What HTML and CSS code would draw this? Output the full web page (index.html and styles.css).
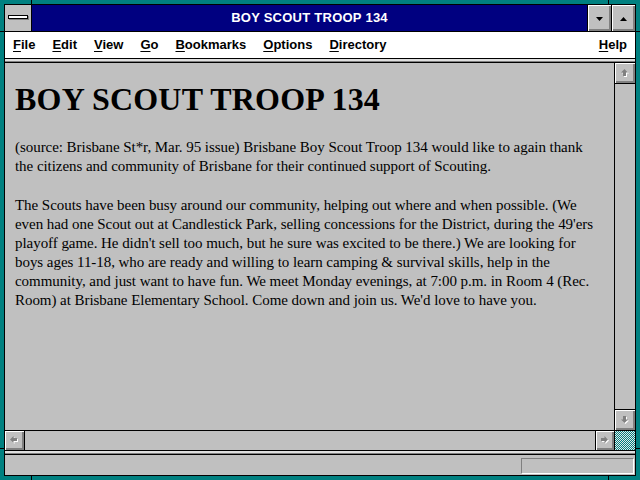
FILE: index.html
```html
<!DOCTYPE html>
<html>
<head>
<meta charset="utf-8">
<link rel="stylesheet" href="styles.css">
</head>
<body>
<div class="desk">
  <span class="notch nt-l"></span><span class="notch nt-r"></span>
  <span class="notch nb-l"></span><span class="notch nb-r"></span>
  <span class="notch nl-t"></span><span class="notch nl-b"></span>
  <span class="notch nr-t"></span><span class="notch nr-b"></span>
  <div class="win">
    <div class="titlebar">
      <div class="sysmenu"><span class="sysbar"></span></div>
      <div class="title">BOY SCOUT TROOP 134</div>
      <div class="tbtn"><svg width="7" height="4" viewBox="0 0 7 4"><polygon points="0,0 7,0 3.5,4" fill="#000"/></svg></div>
      <div class="tbtn"><svg width="7" height="4" viewBox="0 0 7 4"><polygon points="0,4 7,4 3.5,0" fill="#000"/></svg></div>
    </div>
    <div class="menubar">
      <span class="mi"><u>F</u>ile</span>
      <span class="mi"><u>E</u>dit</span>
      <span class="mi"><u>V</u>iew</span>
      <span class="mi"><u>G</u>o</span>
      <span class="mi"><u>B</u>ookmarks</span>
      <span class="mi"><u>O</u>ptions</span>
      <span class="mi"><u>D</u>irectory</span>
      <span class="mi help"><u>H</u>elp</span>
    </div>
    <div class="sep"></div>
    <div class="view">
      <div class="viewrow">
        <div class="doc">
          <h1>BOY SCOUT TROOP 134</h1>
          <p>(source: Brisbane St*r, Mar. 95 issue) Brisbane Boy Scout Troop 134 would like to again thank<br>the citizens and community of Brisbane for their continued support of Scouting.</p>
          <p class="p2">The Scouts have been busy around our community, helping out where and when possible. (We<br>even had one Scout out at Candlestick Park, selling concessions for the District, during the 49'ers<br>playoff game. He didn't sell too much, but he sure was excited to be there.) We are looking for<br>boys ages 11-18, who are ready and willing to learn camping &amp; survival skills, help in the<br>community, and just want to have fun. We meet Monday evenings, at 7:00 p.m. in Room 4 (Rec.<br>Room) at Brisbane Elementary School. Come down and join us. We'd love to have you.</p>
        </div>
        <div class="vscroll">
          <div class="sbtn up"><svg width="9" height="9" viewBox="0 0 9 9"><polygon points="4.5,1 8,4.5 6,4.5 6,8 3,8 3,4.5 1,4.5" fill="#fff"/><polygon points="3.5,0 7,3.5 5,3.5 5,7 2,7 2,3.5 0,3.5" fill="#808080"/></svg></div>
          <div class="track"></div>
          <div class="sbtn down"><svg width="9" height="9" viewBox="0 0 9 9"><polygon points="4.5,8 8,4.5 6,4.5 6,1 3,1 3,4.5 1,4.5" fill="#fff"/><polygon points="3.5,7 7,3.5 5,3.5 5,0 2,0 2,3.5 0,3.5" fill="#808080"/></svg></div>
        </div>
      </div>
      <div class="hrow">
        <div class="sbtn left"><svg width="9" height="9" viewBox="0 0 9 9"><polygon points="1,4.5 4.5,1 4.5,3 8,3 8,6 4.5,6 4.5,8" fill="#fff"/><polygon points="0,3.5 3.5,0 3.5,2 7,2 7,5 3.5,5 3.5,7" fill="#808080"/></svg></div>
        <div class="htrack"></div>
        <div class="sbtn right"><svg width="9" height="9" viewBox="0 0 9 9"><polygon points="8,4.5 4.5,1 4.5,3 1,3 1,6 4.5,6 4.5,8" fill="#fff"/><polygon points="7,3.5 3.5,0 3.5,2 0,2 0,5 3.5,5 3.5,7" fill="#808080"/></svg></div>
        <div class="corner"></div>
      </div>
    </div>
    <div class="sep"></div>
    <div class="status"><div class="field"></div></div>
  </div>
</div>
</body>
</html>
```
FILE: styles.css
```css
* { box-sizing: border-box; }
html, body { margin: 0; padding: 0; }
body {
  width: 640px;
  height: 480px;
  overflow: hidden;
  background: #008080;
  font-family: "Liberation Sans", Arial, sans-serif;
}
.desk {
  position: relative;
  width: 640px;
  height: 480px;
  padding: 4px;
}
.notch { position: absolute; background: #000; }
.nt-l { left: 31px; top: 0; width: 1px; height: 4px; }
.nt-r { left: 608px; top: 0; width: 1px; height: 4px; }
.nb-l { left: 31px; bottom: 0; width: 1px; height: 4px; }
.nb-r { left: 608px; bottom: 0; width: 1px; height: 4px; }
.nl-t { left: 0; top: 31px; width: 4px; height: 1px; }
.nl-b { left: 0; top: 448px; width: 4px; height: 1px; }
.nr-t { right: 0; top: 31px; width: 4px; height: 1px; }
.nr-b { right: 0; top: 448px; width: 4px; height: 1px; }

.win {
  width: 632px;
  height: 472px;
  border: 1px solid #000;
  background: #c0c0c0;
  display: flex;
  flex-direction: column;
}
.titlebar {
  height: 27px;
  flex: none;
  display: flex;
  background: #000080;
  border-bottom: 1px solid #000;
}
.sysmenu {
  width: 27px;
  border-right: 1px solid #000;
  background: #c0c0c0;
  display: flex;
  justify-content: center;
  padding-top: 10px;
}
.sysbar {
  width: 20px;
  height: 4px;
  background: #fff;
  border: 1px solid #000;
  box-shadow: 1px 1px 0 #808080;
}
.title {
  flex: 1;
  text-align: center;
  color: #fff;
  font-weight: bold;
  font-size: 13px;
  letter-spacing: 0.25px;
  line-height: 26px;
}
.tbtn {
  width: 24px;
  border-left: 1px solid #000;
  background: #c0c0c0;
  box-shadow: inset 1px 1px 0 #fff, inset -2px -2px 0 #808080;
  display: flex;
  align-items: center;
  justify-content: center;
  padding-top: 1px;
}
.tbtn svg { display: block; }
.menubar {
  height: 27px;
  flex: none;
  display: flex;
  gap: 17px;
  padding: 0 8px;
  background: #fff;
  border-bottom: 1px solid #000;
  font-weight: bold;
  font-size: 13px;
  line-height: 26px;
  color: #000;
}
.mi u { text-decoration-thickness: 1px; text-underline-offset: 2px; }
.help { margin-left: auto; }
.sep {
  height: 4px;
  flex: none;
  background: linear-gradient(#dfdfdf 0 2px, #808080 2px 3px, #000 3px 4px);
}
.view {
  height: 388px;
  flex: none;
  display: flex;
  flex-direction: column;
}
.viewrow {
  flex: 1;
  display: flex;
  min-height: 0;
}
.doc {
  flex: 1;
  padding: 18px 0 0 10px;
  overflow: hidden;
  font-family: "Liberation Serif", "Times New Roman", serif;
  color: #000;
}
.doc h1 {
  margin: 0;
  font-size: 32px;
  line-height: 36px;
  font-weight: bold;
  letter-spacing: 0.2px;
}
.doc p {
  margin: 21px 0 0;
  font-size: 15px;
  letter-spacing: -0.05px;
  line-height: 19px;
  white-space: nowrap;
}
.doc p.p2 { margin-top: 20px; }
.vscroll {
  width: 21px;
  border-left: 1px solid #000;
  display: flex;
  flex-direction: column;
}
.sbtn {
  background: #c0c0c0;
  box-shadow: inset 1px 1px 0 #fff, inset -2px -2px 0 #808080;
  display: flex;
  align-items: center;
  justify-content: center;
  flex: none;
}
.sbtn svg { display: block; }
.up { height: 21px; border-bottom: 1px solid #000; }
.down { height: 21px; border-top: 1px solid #000; }
.track { flex: 1; }
.hrow {
  height: 21px;
  flex: none;
  display: flex;
  border-top: 1px solid #000;
  border-bottom: 1px solid #000;
}
.left { width: 20px; border-right: 1px solid #000; }
.right { width: 19px; border-left: 1px solid #000; }
.htrack { flex: 1; }
.corner {
  width: 21px;
  border-left: 1px solid #000;
  background: repeating-conic-gradient(#008080 0 25%, #e8e8e8 0 50%) 0 0 / 2px 2px;
}
.status {
  height: 20px;
  flex: none;
  display: flex;
  justify-content: flex-end;
  padding: 3px 1px 1px;
}
.field {
  width: 113px;
  border-top: 1px solid #808080;
  border-left: 1px solid #808080;
  border-bottom: 1px solid #fff;
  border-right: 1px solid #fff;
}
```
